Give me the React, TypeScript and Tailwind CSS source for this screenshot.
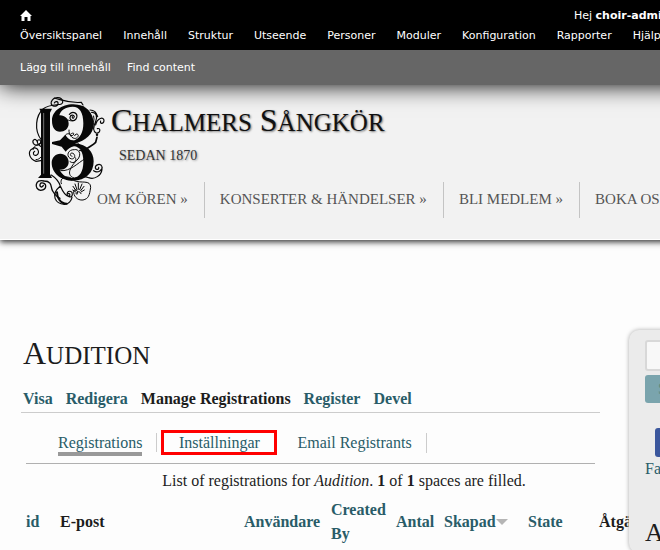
import type { ReactNode } from "react";

const adminLinks = [
  "Översiktspanel",
  "Innehåll",
  "Struktur",
  "Utseende",
  "Personer",
  "Moduler",
  "Konfiguration",
  "Rapporter",
  "Hjälp",
];

function Toolbar() {
  return (
    <div className="relative z-10 font-['DejaVu_Sans',sans-serif] text-[11px] leading-5 text-white shadow-[0_0_22px_#000]">
      <div className="flex h-[50px] flex-col bg-black px-5 pt-[5px]">
        <div className="flex h-5 items-center justify-between">
          <a href="#home" aria-label="Hem">
            <svg viewBox="0 0 12 11" className="h-[11px] w-3" fill="#fff">
              <path d="M6 0 L12 6 H10.500 V11 H7.500 V7 H4.500 V11 H1.500 V6 H0 Z" />
            </svg>
          </a>
          <div className="flex w-[366px] gap-5 pt-px">
            <a href="#account">
              Hej <strong>choir-admin</strong>
            </a>
            <a href="#logout">Logga ut</a>
          </div>
        </div>
        <nav className="flex gap-[21px] pt-px">
          {adminLinks.map((t) => (
            <a key={t} href="#admin">
              {t}
            </a>
          ))}
        </nav>
      </div>
      <div className="flex h-[35px] gap-4 bg-[#666] px-5 pt-2">
        <a href="#add">Lägg till innehåll</a>
        <a href="#find">Find content</a>
      </div>
    </div>
  );
}

function Logo() {
  return (
    <svg
      viewBox="0 0 252 360"
      className="h-[120px] w-[84px] shrink-0"
      fill="none"
      stroke="#080808"
      strokeWidth="3.500"
      strokeLinecap="round"
      role="img"
      aria-label="Chalmers Sångkör"
    >
      <g fill="#080808" stroke="none">
        <path d="M46 56 H84 L78 68 V252 L84 264 H42 L51 254 V66 Z" />
        <path d="M84 92 C84 64 112 43 148 43 C186 43 209 68 209 102 C209 132 184 153 153 160 C190 163 209 186 209 214 C209 249 184 272 148 272 C109 272 83 248 83 218 C83 204 94 191 109 191 C124 191 134 203 134 216 C134 231 120 241 107 239 C114 255 129 264 147 264 C168 262 178 243 178 215 C178 185 167 170 150 169 C139 171 132 177 125 185 L113 170 L84 162 V156 L108 151 L124 134 C130 145 139 151 149 152 C169 145 178 127 178 100 C178 68 167 50 146 50 C125 50 109 62 106 76 C122 75 134 86 134 101 C134 116 121 125 108 125 C93 125 84 112 84 92 Z" />
      </g>
      <path d="M59 70 V250" stroke="#aaa" strokeWidth="2" />
      <path d="M52 150 C29 120 36 76 57 57 C85 35 120 53 116 33 C112 18 88 20 82 35 C78 49 99 54 102 42 C104 34 94 32 91 39" />
      <path d="M91 24 C121 32 136 40 172 37 L177 45" />
      <path d="M136 73 C147 61 162 70 158 83 C154 96 137 94 138 82 C139 74 149 73 151 80 C148 88 144 85 145 80" />
      <path d="M155 88 C149 95 139 93 132 90 M165 48 L180 51" strokeWidth="3" />
      <path d="M203 67 C216 66 221 78 215 94 C208 110 207 124 216 129 C230 132 231 112 220 116 M215 105 C219 84 240 78 240 92 C239 104 226 101 230 93 M198 60 C210 60 218 68 221 80" />
      <path d="M209 78 C214 91 203 103 208 117" strokeWidth="3" />
      <path d="M219 142 L215 157 C207 166 194 170 186 178" strokeWidth="5" />
      <circle cx="219" cy="134" r="2" fill="#080808" />
      <path d="M135 120 C133 138 151 152 160 142 C169 133 154 127 152 137 M128 148 C116 137 129 127 139 133 C154 122 151 139 142 137 M126 158 C143 145 161 156 166 164" strokeWidth="3" />
      <path d="M36 214 C15 207 10 184 25 176 C40 167 51 189 37 196 C28 198 25 188 32 184 M52 170 C31 158 43 142 50 153 C52 165 34 170 28 160 C23 149 35 144 38 153 M36 214 L50 212" />
      <path d="M27 179 C30 163 45 166 50 159 M36 209 C43 209 47 205 50 202" strokeWidth="3" />
      <path d="M150 264 C119 254 148 221 162 207 C174 191 163 176 151 179 C132 178 126 197 138 205 C150 212 158 196 147 190 C137 186 137 199 144 199" strokeWidth="3" />
      <path d="M110 242 C139 245 162 218 182 207 M138 215 C151 224 160 211 154 203 M151 265 C174 263 187 247 186 233 M166 181 L179 184" strokeWidth="3" />
      <path d="M209 242 C222 252 237 238 234 230 C230 218 213 224 214 234 C217 242 226 238 224 232 M234 238 C232 256 212 270 194 263 C178 256 158 262 143 270" />
      <path d="M82 255 C99 266 105 276 109 288 C126 329 150 327 144 307 C134 297 123 312 134 319 C140 317 138 310 133 311 M109 288 C77 315 95 342 121 343 C134 344 142 332 144 322" />
      <path d="M60 273 C33 265 29 298 50 301 C71 299 69 276 51 279 C42 287 54 297 58 286 M60 273 C87 273 79 294 86 303 C92 313 100 322 108 325" strokeWidth="4" />
      <path d="M112 281 C104 260 135 253 151 272 C170 281 200 268 200 292 C196 317 194 326 177 330 C159 332 148 317 149 304 C154 294 165 303 159 313" strokeWidth="3" />
      <path d="M128 341 C110 341 99 324 99 307" strokeWidth="6" />
      <path d="M163 298 V279 M159 299 L153 282 M167 299 L174 282 M156 302 L147 289 M170 302 L180 289 M155 306 L146 300 M171 306 L181 300 M156 311 C158 303 169 303 171 311" strokeWidth="3" />
    </svg>
  );
}

function MenuItem({ children }: { children: ReactNode }) {
  return (
    <li className="flex h-9 items-center border-l border-[#c4c4c4] pr-4 pb-[2px] pl-[15px] first:border-l-0 first:pl-0">
      <a href="#menu">{children}</a>
    </li>
  );
}

function Header() {
  return (
    <header className="flex h-[155px] border-b border-white bg-[#f2f2f2] pt-[5px] pl-6 shadow-[0_2px_6px_#333]">
      <Logo />
      <div className="-ml-[11px] shrink-0 whitespace-nowrap">
        <div className="pl-[14px]">
          <h1 className="pt-[13px] text-[25px] leading-10 text-[#111] uppercase [text-shadow:1px_1px_2px_#777]">
            <span className="text-[32px] leading-8">C</span>halmers
            <span className="text-[32px] leading-8"> S</span>ångkör
          </h1>
          <p className="pt-[3px] pl-2 text-[14px] leading-5 text-[#333] [text-shadow:1px_1px_2px_#999]">
            SEDAN 1870
          </p>
        </div>
        <nav className="pt-4 text-[15px] text-[#555]">
          <ul className="flex">
            <MenuItem>OM KÖREN »</MenuItem>
            <MenuItem>KONSERTER &amp; HÄNDELSER »</MenuItem>
            <MenuItem>BLI MEDLEM »</MenuItem>
            <MenuItem>BOKA OSS</MenuItem>
          </ul>
        </nav>
      </div>
    </header>
  );
}

function Main() {
  return (
    <main className="min-w-0 flex-1 pt-24 pr-[29px] pl-[21px]">
      <h2 className="pl-[2px] text-[25px] leading-10 uppercase">
        <span className="text-[32px] leading-8">A</span>udition
      </h2>
      <nav className="mt-[10px] flex h-[27px] gap-[13px] border-b border-[#ccc] pl-[2px] leading-[26px] font-bold text-[#295c68]">
        <a href="#visa">Visa</a>
        <a href="#redigera">Redigera</a>
        <a href="#manage" className="text-[#1c1c1c]">
          Manage Registrations
        </a>
        <a href="#register">Register</a>
        <a href="#devel">Devel</a>
      </nav>
      <div className="mx-[5px]">
        <nav className="flex h-[51px] items-start border-b border-[#b0b0b0] pt-[17px] pl-8 leading-5 text-[#295c68]">
          <div className="mt-[3px] border-r border-[#ccc] pr-[14px]">
            <a href="#registrations" className="-mb-1 block h-[23px] border-b-4 border-[#999]">
              Registrations
            </a>
          </div>
          <a
            href="#settings"
            className="ml-1 flex h-[25px] w-[116px] items-center justify-center border-3 border-[#f00]"
          >
            Inställningar
          </a>
          <a href="#email" className="mt-[3px] ml-5 border-r border-[#ccc] pr-[14px]">
            Email Registrants
          </a>
        </nav>
        <table className="w-[636px] table-fixed text-left leading-6">
          <caption className="pt-[5px] pb-[5px] text-center">
            List of registrations for <em>Audition</em>. <strong>1</strong> of <strong>1</strong> spaces
            are filled.
          </caption>
          <colgroup>
            <col className="w-[34px]" />
            <col className="w-[184px]" />
            <col className="w-[87px]" />
            <col className="w-[65px]" />
            <col className="w-12" />
            <col className="w-[84px]" />
            <col className="w-[71px]" />
            <col />
          </colgroup>
          <thead>
            <tr className="text-[#295c68]">
              <th><a href="#id">id</a></th>
              <th className="text-[#1c1c1c]">E-post</th>
              <th><a href="#user">Användare</a></th>
              <th><a href="#by">Created By</a></th>
              <th><a href="#count">Antal</a></th>
              <th>
                <a href="#created" className="flex items-center">
                  Skapad
                  <svg viewBox="0 0 12 6" className="h-[6px] w-3" fill="#b5b5b5">
                    <path d="M0 0 H12 L6 6 Z" />
                  </svg>
                </a>
              </th>
              <th><a href="#state">State</a></th>
              <th className="text-[#1c1c1c]">Åtgärder</th>
            </tr>
          </thead>
        </table>
      </div>
    </main>
  );
}

function Sidebar() {
  return (
    <aside className="relative mt-[90px] w-[331px] shrink-0 rounded-[10px] bg-[#ebebeb] pt-[10px] pr-4 pl-4 shadow-[0_0_4px_#aaa]">
      <input
        type="text"
        aria-label="Sök"
        className="block h-[31px] w-full rounded-[3px] border-2 border-[#d8d8d8] bg-[#f8f8f8]"
      />
      <button
        type="button"
        className="mt-1 block h-7 w-full rounded-[3px] bg-[#7aa4ad] pl-[13px] text-left text-[#5d8a80]"
      >
        Sök
      </button>
      <a href="#facebook" className="mt-[25px] flex w-[60px] flex-col text-[#295c68]">
        <svg viewBox="0 0 29 29" className="ml-[10px] h-[29px] w-[29px]">
          <rect width="29" height="29" rx="3" fill="#3b579d" />
          <path d="M16 29 V18 H13 V13 H16 V10 Q16 5 21 5 H25 V9 H22 Q20 9 20 11 V13 H25 L24 18 H20 V29 Z" fill="#fff" />
        </svg>
        <span className="leading-6">Facebook</span>
      </a>
      <h2 className="mt-8 text-[26px] leading-10">Aktuellt</h2>
    </aside>
  );
}

export default function App() {
  return (
    <div className="min-h-screen overflow-x-hidden bg-[#fdfdfd] font-['Liberation_Serif',serif] text-base text-[#1c1c1c]">
      <div className="min-w-[960px]">
        <Toolbar />
        <Header />
        <div className="flex">
          <Main />
          <Sidebar />
        </div>
      </div>
    </div>
  );
}
